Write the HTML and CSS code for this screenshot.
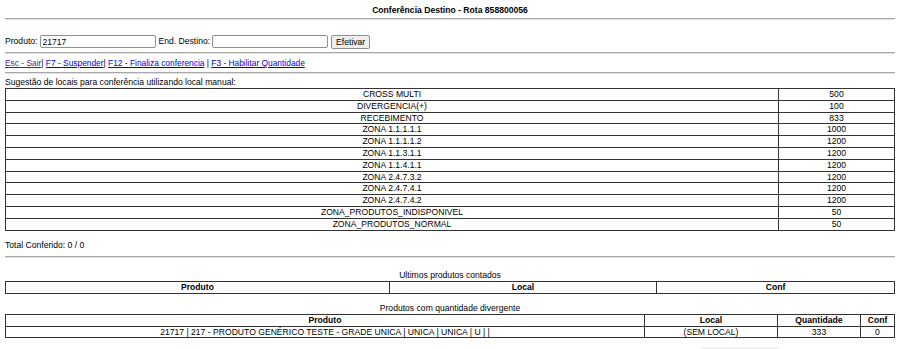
FILE: index.html
```html
<!DOCTYPE html>
<html lang="pt-BR">
<head>
    <meta charset="UTF-8">
    <title>Conferência Destino</title>
    <link rel="stylesheet" href="styles.css">
</head>
<body>
    <div class="titulo">Conferência Destino - Rota 858800056</div>
    <hr class="sep sep-top">

    <div class="form-row">
        <label>Produto:</label>
        <input type="text" class="campo" value="21717">
        <label>End. Destino:</label>
        <input type="text" class="campo" value="">
        <button class="botao">Efetivar</button>
    </div>
    <hr class="sep sep-form">

    <div class="atalhos">
        <a href="#" class="visitado">Esc - Sair</a>| <a href="#">F7 - Suspender</a>| <a href="#">F12 - Finaliza conferencia</a> | <a href="#">F3 - Habilitar Quantidade</a>
    </div>
    <hr class="sep sep-links">

    <div class="legenda">Sugestão de locais para conferência utilizando local manual:</div>
    <table class="grade sugestao">
        <tr><td>CROSS MULTI</td><td class="num">500</td></tr>
        <tr><td>DIVERGENCIA(+)</td><td class="num">100</td></tr>
        <tr><td>RECEBIMENTO</td><td class="num">833</td></tr>
        <tr><td>ZONA 1.1.1.1.1</td><td class="num">1000</td></tr>
        <tr><td>ZONA 1.1.1.1.2</td><td class="num">1200</td></tr>
        <tr><td>ZONA 1.1.3.1.1</td><td class="num">1200</td></tr>
        <tr><td>ZONA 1.1.4.1.1</td><td class="num">1200</td></tr>
        <tr><td>ZONA 2.4.7.3.2</td><td class="num">1200</td></tr>
        <tr><td>ZONA 2.4.7.4.1</td><td class="num">1200</td></tr>
        <tr><td>ZONA 2.4.7.4.2</td><td class="num">1200</td></tr>
        <tr><td>ZONA_PRODUTOS_INDISPONIVEL</td><td class="num">50</td></tr>
        <tr><td>ZONA_PRODUTOS_NORMAL</td><td class="num">50</td></tr>
    </table>

    <div class="total">Total Conferido: 0 / 0</div>
    <hr class="sep sep-total">

    <div class="legenda centro ultimos">Ultimos produtos contados</div>
    <table class="grade contados">
        <tr><th class="c-prod">Produto</th><th class="c-local">Local</th><th>Conf</th></tr>
    </table>

    <div class="legenda centro divergentes">Produtos com quantidade divergente</div>
    <table class="grade divergente">
        <tr><th>Produto</th><th class="d-local">Local</th><th class="d-qtd">Quantidade</th><th class="d-conf">Conf</th></tr>
        <tr><td>21717 | 217 - PRODUTO GENÉRICO TESTE - GRADE UNICA | UNICA | UNICA | U | |</td><td>(SEM LOCAL)</td><td>333</td><td>0</td></tr>
    </table>

    <div class="rodape"></div>
</body>
</html>
```

FILE: styles.css
```css
body {
    margin: 0;
    padding: 5px 5px 0 5px;
    font-family: "Liberation Sans", Arial, sans-serif;
    font-size: 8.6px;
    line-height: 9px;
    color: #000;
    background: #fff;
}

.titulo {
    text-align: center;
    font-weight: bold;
    padding-top: 1px;
}

.sep {
    border: 0;
    height: 0;
    border-top: 1px solid #a8a8a8;
    border-bottom: 1px solid #e2e2e2;
    margin: 0;
}
.sep-top { margin-top: 3px; }
.sep-form { margin-top: 4px; }
.sep-links { margin-top: 4px; }
.sep-total { margin-top: 6px; }

.form-row {
    margin-top: 15px;
    display: flex;
    align-items: center;
    height: 13px;
}
.form-row label {
    margin-right: 2px;
}
.campo {
    width: 116px;
    height: 13px;
    box-sizing: border-box;
    border: 1px solid #8f8f8f;
    border-radius: 2px;
    padding: 0 2px;
    font-family: inherit;
    font-size: 8.6px;
    margin: 0 3px 0 0;
    color: #000;
}
.botao {
    height: 14px;
    box-sizing: border-box;
    border: 1px solid #8f8f8f;
    border-radius: 2px;
    background: #efefef;
    font-family: inherit;
    font-size: 8.6px;
    padding: 0 4px;
    margin: 0;
    color: #000;
}

.atalhos {
    margin-top: 5px;
    font-size: 8.4px;
}
.atalhos a {
    color: #0000ee;
}
.atalhos a.visitado {
    color: #551a8b;
}

.legenda {
    margin-top: 4px;
}
.centro {
    text-align: center;
}
.ultimos { margin-top: 13px; }
.divergentes { margin-top: 10px; }

.grade {
    width: 100%;
    table-layout: fixed;
    border-collapse: collapse;
    margin-top: 1px;
    border: 1px solid #909090;
    border-left-color: #444;
    border-top-color: #777;
}
.grade td, .grade th {
    border: 1px solid #333;
    padding: 0;
    line-height: 10.8px;
    text-align: center;
    white-space: nowrap;
}
.grade th {
    font-weight: bold;
    line-height: 11px;
}
.sugestao .num {
    width: 115px;
}
.contados .c-prod { width: 383px; }
.contados .c-local { width: 266px; }
.divergente .d-local { width: 132px; }
.divergente .d-qtd { width: 82px; }
.divergente .d-conf { width: 33px; }

.total {
    margin-top: 10px;
}

.rodape {
    width: 80px;
    height: 4px;
    margin: 9px 0 0 695px;
    background: #f2f2f2;
    border-radius: 2px;
}
```
